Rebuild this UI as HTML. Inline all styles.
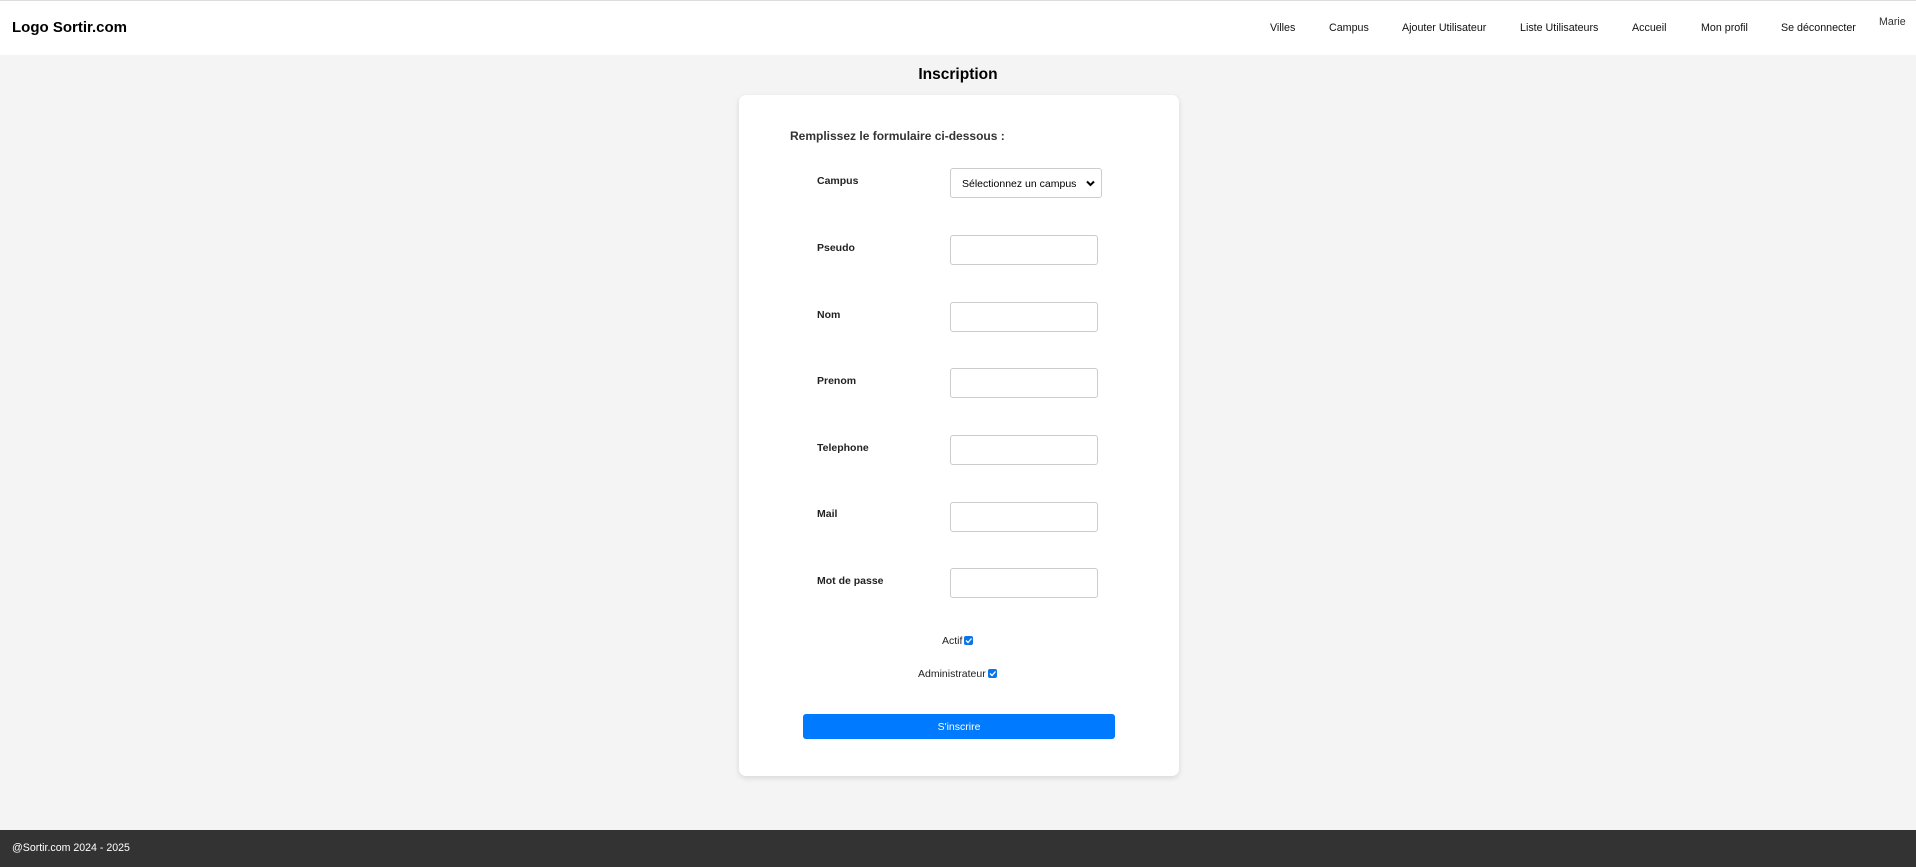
<!DOCTYPE html>
<html><head><meta charset="utf-8"><style>
*{box-sizing:border-box;margin:0;padding:0}
body{width:1916px;height:867px;background:#f4f4f4;font-family:"Liberation Sans",Arial,sans-serif;position:relative;overflow:hidden}
.hdr{position:absolute;left:0;top:0;width:1916px;height:55px;background:#fff;border-top:1px solid #ddd}
.logo{position:absolute;left:12px;top:18px;font-size:15px;font-weight:bold;color:#000}
.nav{position:absolute;top:21px;font-size:10.7px;color:#111}
.marie{position:absolute;left:1879px;top:15px;font-size:10.7px;color:#333}
h1{position:absolute;left:0;width:1916px;text-align:center;top:66px;font-size:15.5px;font-weight:bold;color:#000}
.card{position:absolute;left:739px;top:95px;width:440px;height:681px;background:#fff;border-radius:7px;box-shadow:0 2px 6px rgba(0,0,0,.12)}
.sub{position:absolute;left:790px;top:129px;font-size:12px;font-weight:bold;color:#333}
.lab{position:absolute;left:817px;font-size:10.5px;font-weight:bold;color:#222}
.inp{position:absolute;left:950px;width:148px;height:30px;border:1px solid #ccc;border-radius:3px;background:#fff}
.sel{position:absolute;left:950px;top:168px;width:152px;height:30px;border:1px solid #ccc;border-radius:3px;background:#fff;font-size:10.5px;color:#000;padding:9px 0 0 11px}
.sel svg{position:absolute;right:6px;top:11px}
.chk{position:absolute;font-size:10.5px;color:#222}
.cb{display:inline-block;width:9px;height:9px;background:#0a74e8;border-radius:2px;vertical-align:-1px;margin-left:2px;position:relative}
.btn{position:absolute;left:803px;top:714px;width:312px;height:25px;background:#007bff;border-radius:3px;color:#fff;font-size:10.5px;text-align:center;line-height:27px}
.ft{position:absolute;left:0;top:830px;width:1916px;height:37px;background:#333;color:#fff;font-size:10.6px;padding:12px 0 0 12px}
</style></head><body>
<div class="hdr">
<div class="logo">Logo Sortir.com</div>
<span class="nav" style="left:1270px">Villes</span>
<span class="nav" style="left:1329px">Campus</span>
<span class="nav" style="left:1402px">Ajouter Utilisateur</span>
<span class="nav" style="left:1520px">Liste Utilisateurs</span>
<span class="nav" style="left:1632px">Accueil</span>
<span class="nav" style="left:1701px">Mon profil</span>
<span class="nav" style="left:1781px">Se déconnecter</span>
<span class="marie">Marie</span>
</div>
<h1>Inscription</h1>
<div class="card"></div>
<div class="sub">Remplissez le formulaire ci-dessous :</div>
<div class="lab" style="top:175px">Campus</div>
<div class="sel">Sélectionnez un campus<svg width="9" height="7" viewBox="0 0 9 7"><path d="M1 1.5L4.5 5 8 1.5" stroke="#000" stroke-width="2" fill="none"/></svg></div>
<div class="lab" style="top:242px">Pseudo</div><div class="inp" style="top:235px"></div>
<div class="lab" style="top:309px">Nom</div><div class="inp" style="top:302px"></div>
<div class="lab" style="top:375px">Prenom</div><div class="inp" style="top:368px"></div>
<div class="lab" style="top:442px">Telephone</div><div class="inp" style="top:435px"></div>
<div class="lab" style="top:508px">Mail</div><div class="inp" style="top:502px"></div>
<div class="lab" style="top:575px">Mot de passe</div><div class="inp" style="top:568px"></div>
<div class="chk" style="left:942px;top:635px">Actif<span class="cb"><svg width="9" height="9" style="position:absolute;left:0;top:0"><path d="M2 4.5l2 2 3.5-4" stroke="#fff" stroke-width="1.3" fill="none"/></svg></span></div>
<div class="chk" style="left:918px;top:668px">Administrateur<span class="cb"><svg width="9" height="9" style="position:absolute;left:0;top:0"><path d="M2 4.5l2 2 3.5-4" stroke="#fff" stroke-width="1.3" fill="none"/></svg></span></div>
<div class="btn">S'inscrire</div>
<div class="ft">@Sortir.com 2024 - 2025</div>
</body></html>
